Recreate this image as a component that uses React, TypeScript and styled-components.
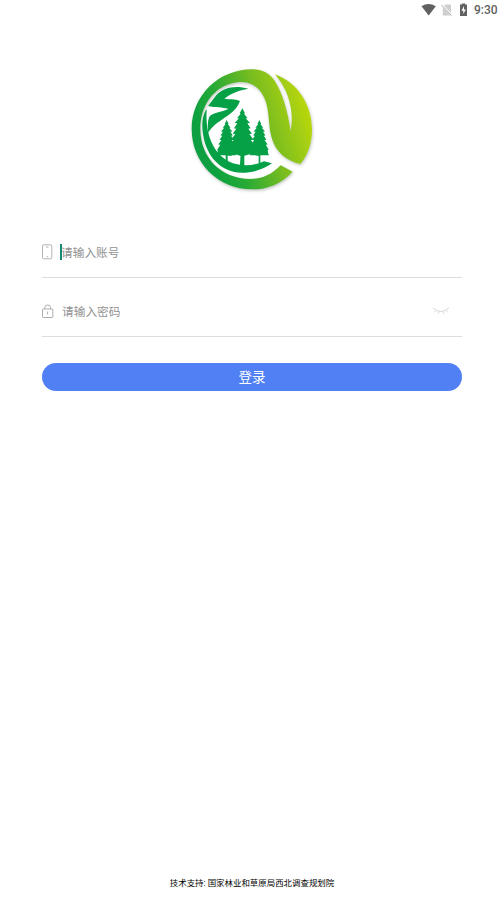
import React from 'react';
import styled, { createGlobalStyle } from 'styled-components';

const GlobalStyle = createGlobalStyle`
  * { box-sizing: border-box; }
  body { margin: 0; background: #fff; font-family: Roboto, "Noto Sans CJK SC", sans-serif; }
`;

const Screen = styled.main`
  display: flex;
  flex-direction: column;
  height: 897px;
  background: #fff;
  overflow: hidden;
`;

const StatusBar = styled.header`
  display: flex;
  justify-content: flex-end;
  align-items: center;
  height: 20px;
  padding-right: 6px;
  color: #616161;
`;

const StatusIcons = styled.svg`
  display: block;
  width: 48px;
  height: 20px;
  margin-right: 5px;
`;

const Clock = styled.time`
  font-size: 12px;
  font-weight: 500;
  line-height: 20px;
  width: 24px;
  white-space: nowrap;
`;

const Logo = styled.svg`
  display: block;
  width: 140px;
  height: 140px;
  margin: 40px auto 0;
`;

const Form = styled.form`
  display: flex;
  flex-direction: column;
  margin: 27px 42px 0;
`;

const Field = styled.label<{ $height: number }>`
  display: flex;
  align-items: flex-start;
  height: ${(p) => p.$height}px;
  padding-top: ${(p) => p.$height - 36}px;
  border-bottom: 1px solid #dedede;
`;

const FieldIcon = styled.svg`
  flex: none;
  width: 12px;
  height: 20px;
  margin-right: 6px;
`;

const Caret = styled.span<{ $active?: boolean }>`
  width: 2px;
  height: 16px;
  margin-top: 2px;
  background: ${(p) => (p.$active ? '#168873' : 'transparent')};
`;

const Placeholder = styled.span<{ $shift: number }>`
  flex: 1;
  margin-left: ${(p) => p.$shift}px;
  padding-top: 1px;
  font-size: 11.7px;
  line-height: 20px;
  color: #929292;
`;

const EyeIcon = styled.svg`
  width: 18px;
  height: 20px;
  margin-right: 12px;
`;

const SubmitButton = styled.button`
  height: 28px;
  margin-top: 26px;
  padding: 0;
  border: 0;
  border-radius: 14px;
  background: #5080f3;
  color: #fff;
  font: 13.5px/28px Roboto, "Noto Sans CJK SC", sans-serif;
`;

const Footer = styled.footer`
  margin-top: auto;
  height: 21px;
  font-size: 8.45px;
  line-height: 15px;
  text-align: center;
  color: #000;
`;

const tree =
  'M0 0 L8 15 L5 16 L16 30 L10 30 L23 44 L15 45 L25 60 L18 61 L29 76 L21 77 L34 94 L26 95 L38 114 L30 115 L39 136 L-39 136 L-30 115 L-38 114 L-26 95 L-34 94 L-21 77 L-29 76 L-18 61 L-25 60 L-15 45 L-23 44 L-10 30 L-16 30 L-5 16 L-8 15 Z';

function ForestLogo() {
  return (
    <Logo viewBox="0 0 420 420" role="img" aria-label="林业">
      <defs>
        <linearGradient id="ribbon" gradientUnits="userSpaceOnUse" x1="50" y1="260" x2="385" y2="150">
          <stop offset="0" stopColor="#079f43" />
          <stop offset=".28" stopColor="#27aa35" />
          <stop offset=".62" stopColor="#79bd20" />
          <stop offset="1" stopColor="#bcd80c" />
        </linearGradient>
        <filter id="shade" x="-10%" y="-10%" width="120%" height="120%">
          <feDropShadow dx="2" dy="4" stdDeviation="4" floodColor="#52634d" floodOpacity=".4" />
        </filter>
      </defs>
      <g filter="url(#shade)">
        <path
          fill="url(#ribbon)"
          d="M332 335 C297 372 257 388 211 388 C109 388 29 309 29 207 C29 107 110 28 210 28 C242 28 263 40 279 64 C301 99 317 152 326 214 C337 151 321 93 279 43 C346 67 390 133 390 210 C390 248 378 286 355 312 C310 300 281 276 268 230 C257 188 265 138 239 99 C218 67 184 59 145 71 C87 89 55 143 55 207 C55 294 119 357 205 357 C242 357 271 342 296 316 Z"
        />
      </g>
      <g fill="#06a047">
        <path d="M199 86 C157 75 123 83 101 108 L78 138 C100 143 122 141 139 147 C119 157 91 158 82 170 C76 184 77 201 79 219 C99 179 157 170 174 123 C158 115 142 119 127 116 C145 101 171 91 199 86 Z" />
        <path d="M72 149 C60 171 59 195 63 222 C72 290 119 338 179 338 C219 338 247 326 270 310 L246 304 C193 328 132 315 101 269 C79 236 71 195 74 150 Z" />
        <path d={tree} transform="translate(134 180) scale(.74 .78)" />
        <path d={tree} transform="translate(232 180) scale(.74 .78)" />
        <path d={tree} transform="translate(181 145)" />
        <path d="M107 266 H257 L258 283 L242 280 L229 288 L207 282 L187 287 L174 287 L158 282 L145 288 L132 285 L107 283 Z" />
        <path d="M131 278 H137 V320 H131 Z M176 278 H187 V331 H173 Z M230 278 H235 V315 H230 Z" />
      </g>
    </Logo>
  );
}

export default function App() {
  return (
    <Screen>
      <GlobalStyle />
      <StatusBar>
        <StatusIcons viewBox="0 0 48 20" fill="none">
          <path d="M.5 6.3 Q7.5 1.5 14.8 6.3 L7.7 15.5 Z" fill="#616161" />
          <path d="M30 4.5 V15.5 H21.8 V7.5 L24.5 4.5 Z" fill="#cecece" />
          <path d="M21 5 L31 15.5" stroke="#fff" strokeWidth="2" />
          <path d="M20.5 5 L30.5 15.5" stroke="#aaa" strokeWidth="1" />
          <path d="M39 4.5 H40.8 V3.5 H44.2 V4.5 H46 V16 H39 Z" fill="#616161" />
          <path d="M43 6 L40.5 10.8 H42.3 V14 L44.8 9.5 H43 Z" fill="#fff" />
        </StatusIcons>
        <Clock>9:30</Clock>
      </StatusBar>
      <ForestLogo />
      <Form onSubmit={(event) => event.preventDefault()}>
        <Field $height={51}>
          <FieldIcon viewBox="0 0 12 20" fill="none" stroke="#aaa" strokeWidth=".9">
            <rect x=".5" y="2.8" width="9.3" height="14" rx="1.2" />
            <path d="M4 5 H6.4 M4.5 14.8 H6" />
          </FieldIcon>
          <Caret $active />
          <Placeholder $shift={-1}>请输入账号</Placeholder>
        </Field>
        <Field $height={59}>
          <FieldIcon viewBox="0 0 12 20" fill="none" stroke="#a3a3a3" strokeWidth=".9">
            <rect x=".5" y="8" width="10.3" height="8.5" rx=".8" />
            <path d="M2.8 8 V6.5 Q2.8 4 5.6 4 Q8.5 4 8.5 6.5 V8 M5.6 10.5 V13.5" />
          </FieldIcon>
          <Caret />
          <Placeholder $shift={0}>请输入密码</Placeholder>
          <EyeIcon viewBox="0 0 18 20" fill="none" stroke="#d2d2d2" strokeWidth=".9">
            <path d="M1 7 Q8.8 14 17 7 M4 9.3 L2.3 11.2 M7 10.3 L6.5 12.8 M11 10.3 L11.5 12.8 M14 9.3 L15.7 11.2" />
          </EyeIcon>
        </Field>
        <SubmitButton type="submit">登录</SubmitButton>
      </Form>
      <Footer>技术支持: 国家林业和草原局西北调查规划院</Footer>
    </Screen>
  );
}
